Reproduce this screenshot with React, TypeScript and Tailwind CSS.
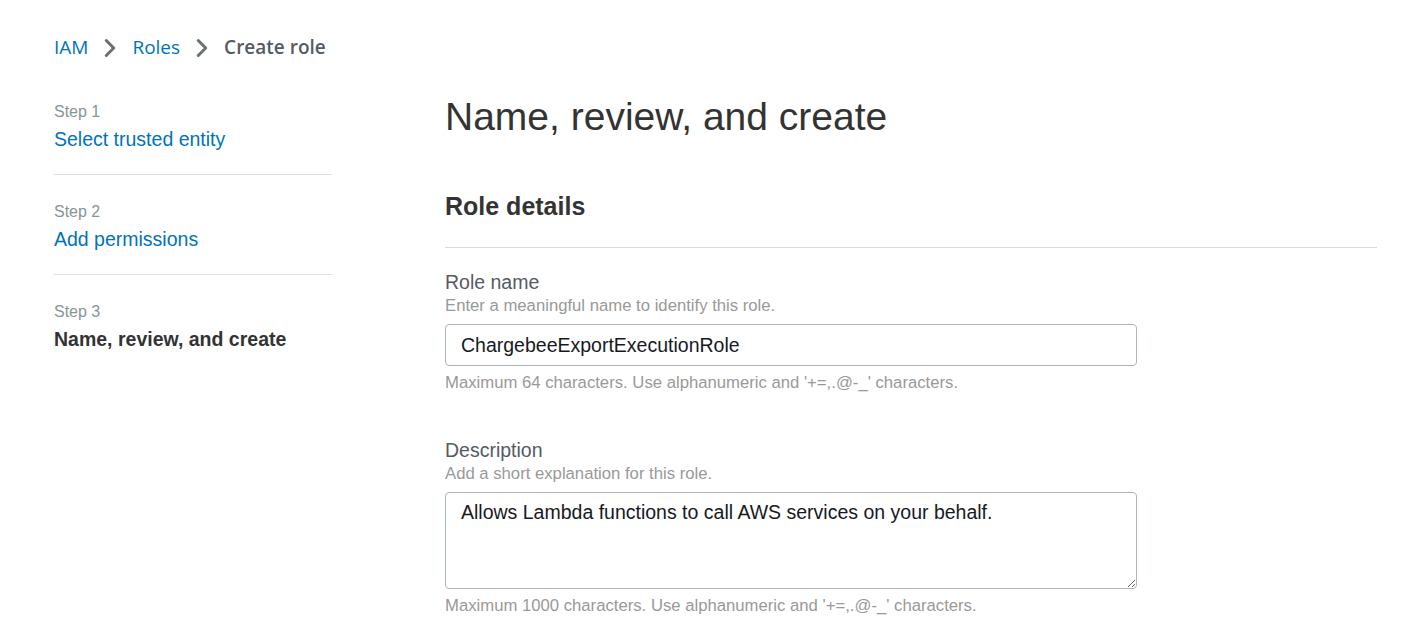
import { ChevronRight } from 'lucide-react';

const steps = [
    { label: 'Step 1', title: 'Select trusted entity', current: false },
    { label: 'Step 2', title: 'Add permissions', current: false },
    { label: 'Step 3', title: 'Name, review, and create', current: true },
];

export default function App() {
    return (
        <div className="min-h-screen bg-white text-[#333333] font-['Liberation_Sans',Arial,sans-serif]">
            {/* Breadcrumbs */}
            <nav className="flex items-center pl-[54px] pt-[35px] h-[60px] text-[19px] font-['Open_Sans',sans-serif]">
                <a className="text-[#0073bb]">IAM</a>
                <ChevronRight className="mx-[7px] h-[30px] w-[30px] text-[#687078]" strokeWidth={2.4} />
                <a className="text-[#0073bb]">Roles</a>
                <ChevronRight className="mx-[7px] h-[30px] w-[30px] text-[#687078]" strokeWidth={2.4} />
                <span className="font-semibold text-[#545b64]">Create role</span>
            </nav>

            <div className="flex pl-[54px] pt-[40px]">
                {/* Wizard steps */}
                <ul className="w-[278px] shrink-0 pt-[2px]">
                    {steps.map((s, i) => (
                        <li key={s.label} className={`${i < steps.length - 1 ? 'border-b border-[#e0e0e0] pb-[23px] mb-[27px]' : ''}`}>
                            <div className="text-[16px] leading-[20px] text-[#879596]">{s.label}</div>
                            <div className={`mt-[5px] text-[19.5px] leading-[24px] ${s.current ? 'font-bold text-[#333]' : 'text-[#0073bb]'}`}>{s.title}</div>
                        </li>
                    ))}
                </ul>

                {/* Main content */}
                <main className="ml-[113px] flex-1 pr-[49px]">
                    <h1 className="-mt-[7px] text-[39px] leading-[48px] text-[#333]">Name, review, and create</h1>

                    <h2 className="mt-[50px] text-[25px] leading-[30px] font-bold text-[#333]">Role details</h2>
                    <div className="mt-[26px] border-t border-[#d5dbdb]" />

                    <div className="mt-[22px]">
                        <label className="block text-[19.5px] leading-[24px] text-[#545b64]">Role name</label>
                        <div className="text-[16.7px] leading-[24px] text-[#999999]">Enter a meaningful name to identify this role.</div>
                        <input
                            readOnly
                            value="ChargebeeExportExecutionRole"
                            className="mt-[6px] block h-[42px] w-[692px] rounded-[4px] border border-[#aab7b8] px-[15px] text-[19.5px] text-[#16191f] outline-none"
                        />
                        <div className="mt-[6px] text-[16.7px] leading-[22px] text-[#999999]">Maximum 64 characters. Use alphanumeric and '+=,.@-_' characters.</div>
                    </div>

                    <div className="mt-[44px]">
                        <label className="block text-[19.5px] leading-[24px] text-[#545b64]">Description</label>
                        <div className="text-[16.7px] leading-[24px] text-[#999999]">Add a short explanation for this role.</div>
                        <textarea
                            readOnly
                            value="Allows Lambda functions to call AWS services on your behalf."
                            className="mt-[6px] block h-[97px] w-[692px] rounded-[4px] border border-[#aab7b8] px-[15px] py-[7px] text-[19.5px] leading-[24px] text-[#16191f] outline-none"
                        />
                        <div className="mt-[6px] text-[16.7px] leading-[22px] text-[#999999]">Maximum 1000 characters. Use alphanumeric and '+=,.@-_' characters.</div>
                    </div>
                </main>
            </div>
        </div>
    );
}
